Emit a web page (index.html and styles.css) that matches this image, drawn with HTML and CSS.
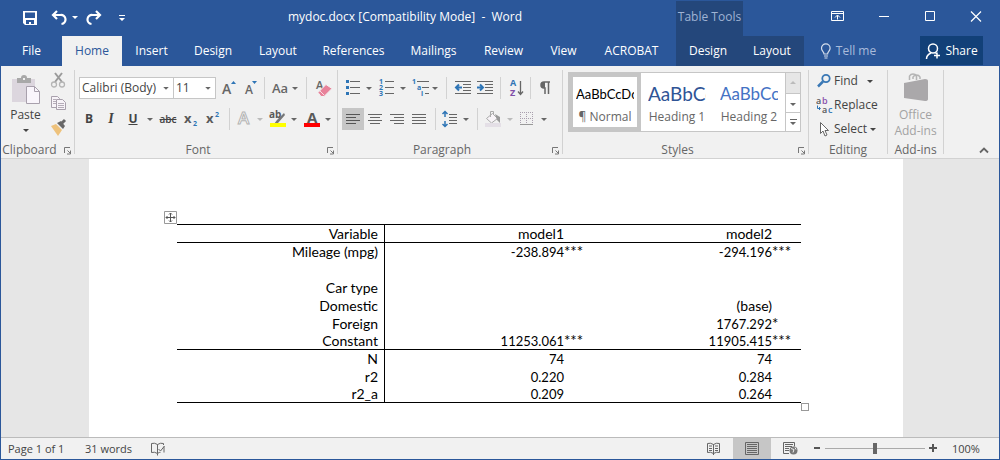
FILE: index.html
```html
<!DOCTYPE html>
<html lang="en">
<head>
<meta charset="utf-8">
<title>mydoc.docx - Word</title>
<link rel="stylesheet" href="styles.css">
</head>
<body>
<svg class="defs" aria-hidden="true">
  <symbol id="caret" viewBox="0 0 12 22"><path d="M3 10h6l-3 3z" fill="currentColor"/></symbol>
  <symbol id="launch" viewBox="0 0 16 16"><path d="M6.500 11V5.500H12M9.500 8.500l3 3M12.500 8.500v3.500H9" fill="none" stroke="#777"/></symbol>
</svg>
<div class="window">
  <header class="titlebar">
    <div class="quick">
      <button class="ib" aria-label="Save"><svg width="50" height="35"><path d="M22 10h14v14H24l-2-2z" fill="#fff"/><path d="M24 11.500h10v5.500H24zM25 19h8v4h-3v-2h-2v2h-3z" fill="#2b579a"/></svg></button>
      <button class="ib" aria-label="Undo"><svg width="18" height="35"><path d="M6 10l-4 4 4 4M2.500 14H9.500a4.500 4.500 0 0 1 1 9" fill="none" stroke="#fff" stroke-width="2.200"/></svg></button>
      <button class="ib caret" aria-label="Undo list"><svg width="12" height="35"><path d="M3 15h6l-3 3z" fill="#fff"/></svg></button>
      <button class="ib" aria-label="Redo"><svg width="24" height="35"><path d="M15 10l4 4-4 4M18.500 14H11.500a4.500 4.500 0 0 0-1 9" fill="none" stroke="#fff" stroke-width="2.200"/></svg></button>
      <button class="ib" aria-label="Customize toolbar"><svg width="29" height="35"><path d="M14 14h6v1h-6zM14 17h6l-3 3z" fill="#fff"/></svg></button>
    </div>
    <h1 class="title">mydoc.docx [Compatibility Mode]&nbsp; -&nbsp; Word</h1>
    <div class="context">Table Tools</div>
    <div class="controls">
      <button class="ib" aria-label="Ribbon display options"><svg width="46" height="30"><path d="M16.500 10.500h12v9h-12zM16.500 12.500h12M22.500 18.500v-4M20 16.500l2.500-2.500 2.500 2.500" fill="none" stroke="#fff"/></svg></button>
      <button class="ib" aria-label="Minimize"><svg width="46" height="30"><path d="M18 15.500h10" stroke="#fff"/></svg></button>
      <button class="ib" aria-label="Maximize"><svg width="46" height="30"><path d="M18.500 10.500h9v9h-9z" fill="none" stroke="#fff"/></svg></button>
      <button class="ib" aria-label="Close"><svg width="46" height="30"><path d="M18 10.500l10 10M28 10.500l-10 10" stroke="#fff" stroke-width="1.200"/></svg></button>
    </div>
  </header>
  <nav class="tabs">
    <button>File</button>
    <button class="active">Home</button>
    <button>Insert</button>
    <button>Design</button>
    <button>Layout</button>
    <button>References</button>
    <button>Mailings</button>
    <button>Review</button>
    <button>View</button>
    <button class="wide">ACROBAT</button>
    <button class="tool">Design</button>
    <button class="tool">Layout</button>
    <button class="tell"><svg width="12" height="16"><path d="M4 11c0-2.500-2.500-3-2.500-5.800a4.300 4.300 0 0 1 8.600 0C10.100 8 7.600 8.500 7.600 11zM4 13h4M4.500 15h3" fill="none" stroke="#d5deec" stroke-width="1.200"/></svg>Tell me</button>
    <button class="share"><svg width="16" height="18"><circle cx="8" cy="6.500" r="4.500" fill="none" stroke="#fff" stroke-width="1.500"/><path d="M1.500 17c0-3.500 2-5 4.500-6M10 10.500l1.500 1M12 10.500v6M9 13.500h6" fill="none" stroke="#fff" stroke-width="1.500"/></svg>Share</button>
  </nav>

  <div class="ribbon">
    <section class="group clipboard">
      <div class="body">
        <button class="ib paste"><svg width="30" height="31"><path d="M1 5h23v23H1z" fill="#dcd6de"/><path d="M6 4h4a3 3 0 0 1 6 0h4v5H6z" fill="#a8a8a8"/><path d="M12 4h2v2h-2z" fill="#f1f1f1"/><path d="M15.500 12.500h8l5 5v12h-13z" fill="#f9f5fb" stroke="#a8a0ac"/><path d="M23.500 12.500v5h5" fill="none" stroke="#a8a0ac"/></svg><span>Paste</span><svg class="drop" width="12" height="14" viewBox="0 4 12 14"><use href="#caret" width="12" height="22"/></svg></button>
        <div class="stack">
          <button class="ib" aria-label="Cut"><svg width="18" height="23"><path d="M5 4l7 9M12 4l-7 9" stroke="#9b9b9b" stroke-width="2"/><circle cx="4" cy="15.500" r="2.500" fill="none" stroke="#b5b5b5" stroke-width="1.300"/><circle cx="12" cy="15.500" r="2.500" fill="none" stroke="#b5b5b5" stroke-width="1.300"/></svg></button>
          <button class="ib" aria-label="Copy"><svg width="18" height="23"><g fill="#f7f3f8" stroke="#a8a0ac"><path d="M1.500 4.500h6l2 2v9h-8z"/><path d="M6.500 7.500h6l3 3v7h-9z"/></g><path d="M3 7.500h3M3 9.500h3M3 11.500h3M8 11.500h6M8 13.500h6M8 15.500h6" stroke="#b5adb8"/></svg></button>
          <button class="ib" aria-label="Format Painter"><svg width="18" height="23"><path d="M1 11l5-2 6 6-4 6z" fill="#eec27c"/><path d="M7 8l6 6 2-3-4-5z" fill="#686868"/><path d="M11 9l4-4" stroke="#686868" stroke-width="3"/></svg></button>
        </div>
      </div>
      <footer><span>Clipboard</span><button class="ib" aria-label="Clipboard settings"><svg width="16" height="16"><use href="#launch"/></svg></button></footer>
    </section>
    <i class="divider"></i>
    <section class="group font">
      <div class="body rows">
        <div class="row inset">
          <label class="combo name"><select aria-label="Font"><option>Calibri (Body)</option></select><svg width="12" height="20"><use href="#caret"/></svg></label>
          <label class="combo size"><select aria-label="Font size"><option>11</option></select><svg width="12" height="20"><use href="#caret"/></svg></label>
          <button class="ib" aria-label="Grow font"><svg width="24" height="22"><text x="6" y="17" font-size="14" class="medium">A</text><path d="M15 7l2.500-3L20 7z" fill="#2e75b6"/></svg></button>
          <button class="ib" aria-label="Shrink font"><svg width="24" height="22"><text x="5" y="17" font-size="12" class="medium">A</text><path d="M12 4h5l-2.500 3z" fill="#2e75b6"/></svg></button>
          <i class="sep tight"></i>
          <button class="ib" aria-label="Change case"><svg width="24" height="22"><text x="7" y="16" font-size="13" class="medium">Aa</text></svg></button>
          <button class="ib caret" aria-label="Case options"><svg width="12" height="22"><use href="#caret"/></svg></button>
          <i class="sep"></i>
          <button class="ib" aria-label="Clear formatting"><svg width="26" height="22"><text x="9" y="12" font-size="11" class="medium">A</text><path d="M11 15.500l8-8 6 4-8 8h-3z" fill="#e8829a" stroke="#f1f1f1"/><path d="M13 14l4 4" stroke="#fbdde3"/></svg></button>
        </div>
        <div class="row edge">
          <button class="ib letter b">B</button>
          <button class="ib letter i">I</button>
          <button class="ib letter u">U</button>
          <button class="ib caret" aria-label="Underline style"><svg width="12" height="22"><use href="#caret"/></svg></button>
          <button class="ib strike">abc</button>
          <button class="ib" aria-label="Subscript"><svg width="22" height="22"><text x="4" y="15" font-size="13" class="heavy">x</text><text x="13" y="18" font-size="7" class="blue">2</text></svg></button>
          <button class="ib" aria-label="Superscript"><svg width="22" height="22"><text x="4" y="15" font-size="13" class="heavy">x</text><text x="13" y="9" font-size="7" class="blue">2</text></svg></button>
          <i class="sep"></i>
          <button class="ib" aria-label="Text effects"><svg width="24" height="22"><text x="8" y="16" font-size="17" fill="#fff" stroke="#b3b3b3" font-weight="600">A</text></svg></button>
          <button class="ib caret faint" aria-label="Effects options"><svg width="12" height="22"><use href="#caret"/></svg></button>
          <button class="ib" aria-label="Highlight colour"><svg width="22" height="22"><text x="3" y="10" font-size="10" class="heavy">ab</text><path d="M18 5l-7 7-3 4 4-1 7-8z" fill="#777"/><path d="M4 15h16v4H4z" fill="#ff0"/></svg></button>
          <button class="ib caret" aria-label="Highlight options"><svg width="12" height="22"><use href="#caret"/></svg></button>
          <button class="ib" aria-label="Font colour"><svg width="22" height="22"><text x="7" y="15" font-size="15" class="heavy">A</text><path d="M4 15h16v4H4z" fill="red"/></svg></button>
          <button class="ib caret" aria-label="Colour options"><svg width="12" height="22"><use href="#caret"/></svg></button>
        </div>
      </div>
      <footer><span>Font</span><button class="ib" aria-label="Font settings"><svg width="16" height="16"><use href="#launch"/></svg></button></footer>
    </section>
    <i class="divider"></i>
    <section class="group para">
      <div class="body rows">
        <div class="row edge">
          <button class="ib" aria-label="Bullets"><svg width="22" height="22"><path d="M9 4.500h10M9 10.500h10M9 16.500h10" stroke="#666"/><path d="M5 3h3v3H5zM5 9h3v3H5zM5 15h3v3H5z" fill="#2e75b6"/></svg></button>
          <button class="ib caret" aria-label="Bullet options"><svg width="12" height="22"><use href="#caret"/></svg></button>
          <button class="ib" aria-label="Numbering"><svg width="22" height="22"><path d="M10 4.500h9M10 10.500h9M10 16.500h9" stroke="#666"/><g font-size="7" class="blue"><text x="4" y="7">1</text><text x="4" y="13">2</text><text x="4" y="19">3</text></g></svg></button>
          <button class="ib caret" aria-label="Numbering options"><svg width="12" height="22"><use href="#caret"/></svg></button>
          <button class="ib" aria-label="Multilevel list"><svg width="20" height="22"><path d="M8 4.500h12M13 10.500h7M16 16.500h4" stroke="#666"/><g font-size="7" class="blue"><text x="3" y="7">1</text><text x="8" y="13">a</text><text x="12" y="19">i</text></g></svg></button>
          <button class="ib caret" aria-label="Multilevel options"><svg width="12" height="22"><use href="#caret"/></svg></button>
          <i class="sep"></i>
          <button class="ib" aria-label="Decrease indent"><svg width="24" height="22"><path d="M8 4.500h16M16 7.500h8M16 10.500h8M16 13.500h8M8 16.500h16" stroke="#666"/><path d="M15 10.500H9M12 7.500l-3 3 3 3" fill="none" stroke="#2e75b6" stroke-width="2"/></svg></button>
          <button class="ib" aria-label="Increase indent"><svg width="24" height="22"><path d="M6 4.500h16M14 7.500h8M14 10.500h8M14 13.500h8M6 16.500h16" stroke="#666"/><path d="M6 10.500h6M9 7.500l3 3-3 3" fill="none" stroke="#2e75b6" stroke-width="2"/></svg></button>
          <i class="sep"></i>
          <button class="ib" aria-label="Sort"><svg width="24" height="22"><g font-size="9" font-weight="700"><text x="9" y="9" fill="#2e75b6">A</text><text x="9" y="19" fill="#7f4fa8">Z</text></g><path d="M19.500 4v13M17 14.500l2.500 3 2.500-3" fill="none" stroke="#666" stroke-width="1.300"/></svg></button>
          <i class="sep"></i>
          <button class="ib" aria-label="Show paragraph marks"><svg width="24" height="22"><path d="M19 5h-6a3 3 0 0 0 0 6h1v6M17.500 5v12" fill="none" stroke="#666" stroke-width="1.500"/><path d="M14 5h-1a3 3 0 0 0 0 6h1z" fill="#666"/></svg></button>
        </div>
        <div class="row inset">
          <button class="ib on" aria-label="Align left"><svg width="22" height="22"><path d="M4 6.500h14M4 9.500h10M4 12.500h14M4 15.500h10" stroke="#555"/></svg></button>
          <button class="ib" aria-label="Center"><svg width="22" height="22"><path d="M4 6.500h14M6 9.500h10M4 12.500h14M6 15.500h10" stroke="#666"/></svg></button>
          <button class="ib" aria-label="Align right"><svg width="22" height="22"><path d="M4 6.500h14M8 9.500h10M4 12.500h14M8 15.500h10" stroke="#666"/></svg></button>
          <button class="ib" aria-label="Justify"><svg width="22" height="22"><path d="M4 6.500h14M4 9.500h14M4 12.500h14M4 15.500h14" stroke="#666"/></svg></button>
          <i class="sep"></i>
          <button class="ib" aria-label="Line spacing"><svg width="24" height="22"><path d="M13 6.500h8M13 9.500h8M13 12.500h8M13 15.500h8" stroke="#666"/><path d="M9 4v5M9 13v5M6.500 6L9 3.500 11.500 6M6.500 16l2.500 2.500 2.500-2.500" fill="none" stroke="#2e75b6" stroke-width="1.500"/></svg></button>
          <button class="ib caret" aria-label="Spacing options"><svg width="12" height="22"><use href="#caret"/></svg></button>
          <i class="sep"></i>
          <button class="ib" aria-label="Shading"><svg width="26" height="22"><path d="M8.500 10.500l6-5 5 5-6 4.500z" fill="#f8f4f8" stroke="#aaa"/><path d="M12.500 9V3.500h3V7" fill="none" stroke="#aaa"/><path d="M17 6l5 3v6l-3-3z" fill="#999"/><path d="M7 15h16v4H7z" fill="#e4dfe6"/></svg></button>
          <button class="ib caret faint" aria-label="Shading options"><svg width="12" height="22"><use href="#caret"/></svg></button>
          <button class="ib" aria-label="Borders"><svg width="22" height="22"><path d="M4.500 4v12M10.500 4v12M16.500 4v12M4 4.500h13M4 10.500h13" stroke="#a99fae" stroke-dasharray="1 1"/><path d="M4 16.500h13" stroke="#999"/></svg></button>
          <button class="ib caret" aria-label="Border options"><svg width="12" height="22"><use href="#caret"/></svg></button>
        </div>
      </div>
      <footer><span>Paragraph</span><button class="ib" aria-label="Paragraph settings"><svg width="16" height="16"><use href="#launch"/></svg></button></footer>
    </section>
    <i class="divider"></i>
    <section class="group styles">
      <div class="body">
        <div class="gallery">
          <button class="style chosen"><span class="sample normal">AaBbCcDc</span><span>¶ Normal</span></button>
          <button class="style"><span class="sample h1">AaBbCc</span><span>Heading 1</span></button>
          <button class="style"><span class="sample h2">AaBbCc</span><span>Heading 2</span></button>
          <div class="scroll">
            <button class="ib off" aria-label="Scroll up"><svg width="14" height="20"><path d="M4 11h6l-3-3z" fill="#bbb"/></svg></button>
            <button class="ib" aria-label="Scroll down"><svg width="14" height="18"><path d="M4 9h6l-3 3z" fill="#666"/></svg></button>
            <button class="ib" aria-label="More styles"><svg width="14" height="18"><path d="M4 6h7v1H4zM4 9h6l-3 3z" fill="#666"/></svg></button>
          </div>
        </div>
      </div>
      <footer><span>Styles</span><button class="ib" aria-label="Styles settings"><svg width="16" height="16"><use href="#launch"/></svg></button></footer>
    </section>
    <i class="divider"></i>
    <section class="group editing">
      <div class="body commands">
        <button class="ib"><svg width="18" height="18"><circle cx="10" cy="6.500" r="3.700" fill="none" stroke="#3a78b5" stroke-width="1.800"/><path d="M7 9.500l-5 5" stroke="#3a78b5" stroke-width="2.500"/></svg><span>Find</span><svg class="far" width="12" height="22"><use href="#caret"/></svg></button>
        <button class="ib"><svg width="18" height="18"><g font-size="9" font-weight="600"><text x="0" y="8" fill="#555">a</text><text x="6" y="8" fill="#8a50ab">b</text><text x="6" y="17" fill="#555">a</text><text x="12" y="17" fill="#2e75b6">c</text></g><path d="M1.500 9.500v3H4M3 11l1.500 1.500L3 14" fill="none" stroke="#2e75b6"/></svg><span>Replace</span></button>
        <button class="ib"><svg width="18" height="18"><path d="M4.500 2.500v11l2.500-2.500 2 5 2-1-2-4.500h3.500z" fill="#fff" stroke="#666"/></svg><span>Select</span><svg width="12" height="22"><use href="#caret"/></svg></button>
      </div>
      <footer><span>Editing</span></footer>
    </section>
    <i class="divider"></i>
    <section class="group addins">
      <div class="body">
        <button class="ib office"><svg width="26" height="31"><path d="M1 11l21-4q3 0 3 2v18q0 2-3 2L1 26z" fill="#aaa8aa"/><path d="M6.500 8V4a4 4 0 0 1 7 0v4M10 7V5a4 4 0 0 1 7 0v2" fill="none" stroke="#b5b5b5" stroke-width="1.500"/></svg><span>Office<br>Add-ins</span></button>
      </div>
      <footer><span>Add-ins</span></footer>
    </section>
    <i class="divider"></i>
    <button class="ib collapse" aria-label="Collapse the ribbon"><svg width="30" height="16"><path d="M11 10.500l4-4 4 4" fill="none" stroke="#666" stroke-width="1.800"/></svg></button>
  </div>

  <main class="workspace">
    <article class="page">
      <div class="tablewrap">
        <svg class="move" width="13" height="13"><path d="M.5.500h12v12H.5z" fill="#fff" stroke="#999"/><path d="M6.500 2v9M2 6.500h9M5 3.500L6.500 2 8 3.500M5 9.500L6.500 11 8 9.500M3.500 5L2 6.500 3.500 8M9.500 5L11 6.500 9.500 8" fill="none" stroke="#555"/></svg>
        <table>
          <thead>
            <tr><th>Variable</th><th>model1<span class="stars"></span></th><th>model2<span class="stars"></span></th></tr>
          </thead>
          <tbody>
            <tr><th>Mileage (mpg)</th><td>-238.894<span class="stars">***</span></td><td>-294.196<span class="stars">***</span></td></tr>
            <tr><th>&nbsp;</th><td></td><td></td></tr>
            <tr><th>Car type</th><td></td><td></td></tr>
            <tr><th>Domestic</th><td></td><td class="base">(base)<span class="stars"></span></td></tr>
            <tr><th>Foreign</th><td></td><td>1767.292<span class="stars">*</span></td></tr>
            <tr><th>Constant</th><td>11253.061<span class="stars">***</span></td><td>11905.415<span class="stars">***</span></td></tr>
          </tbody>
          <tbody>
            <tr><th>N</th><td>74<span class="stars"></span></td><td>74<span class="stars"></span></td></tr>
            <tr><th>r2</th><td>0.220<span class="stars"></span></td><td>0.284<span class="stars"></span></td></tr>
            <tr><th>r2_a</th><td>0.209<span class="stars"></span></td><td>0.264<span class="stars"></span></td></tr>
          </tbody>
        </table>
        <i class="resize"></i>
      </div>
    </article>
  </main>

  <footer class="status">
    <span class="pages">Page 1 of 1</span>
    <span class="words">31 words</span>
    <button class="ib proof" aria-label="Proofing"><svg width="16" height="16"><path d="M7.500 3.500q-3-2-6-1v9q3-1 6 1v2M7.500 12.500q2-1.500 3-1.200M7.500 12V3.500q3-2 6-1V4M14 5.500v6M8.500 8l2 2 4-5" fill="none" stroke="#666"/></svg></button>
    <div class="views">
      <button class="ib" aria-label="Read mode"><svg width="38" height="21"><path d="M18.500 6.500q-3-2-6-1v9q3-1 6 1zM18.500 6.500q3-2 6-1v9q-3-1-6 1zM14 8h3M14 10.500h3M14 12.500h3M20 8h3M20 10.500h3M20 12.500h3M18.500 15v2" fill="none" stroke="#666"/></svg></button>
      <button class="ib on" aria-label="Print layout"><svg width="38" height="21"><path d="M12.500 4.500h13v12h-13zM14 6.500h10M14 8.500h10M14 10.500h10M14 12.500h10M14 14.500h10" fill="none" stroke="#666"/></svg></button>
      <button class="ib" aria-label="Web layout"><svg width="38" height="21"><path d="M18 15.500h-5.500v-11h11v4M14 6.500h8M14 8.500h7M14 10.500h4M14 12.500h4" fill="none" stroke="#666"/><circle cx="22.500" cy="12.500" r="4" fill="#777"/><path d="M20 10.500l3 1-1 3M24 9.500l1 2" fill="none" stroke="#f1f1f1"/></svg></button>
    </div>
    <button class="ib" aria-label="Zoom out"><svg width="16" height="21"><path d="M5 10h6" stroke="#555" stroke-width="2"/></svg></button>
    <input class="zoom" type="range" aria-label="Zoom" min="0" max="100" value="50">
    <button class="ib" aria-label="Zoom in"><svg width="16" height="21"><path d="M4 10h8M8 6v8" stroke="#555" stroke-width="2"/></svg></button>
    <span class="percent">100%</span>
  </footer>
</div>
</body>
</html>
```
FILE: styles.css
```css
* { box-sizing: border-box; }
body { margin: 0; font: 12px/16px "Open Sans", "Noto Sans", sans-serif; color: #444; }
button, select, input { font: inherit; color: inherit; margin: 0; }
svg { display: block; flex: none; }
.defs { position: absolute; width: 0; height: 0; }
.window { min-height: 100vh; display: flex; flex-direction: column; border: 1px solid #2b579a; background: #f1f1f1; }
.ib { flex: none; display: flex; align-items: center; padding: 0; border: 0; background: none; }
.on { background: #c6c6c6; }

.titlebar { display: flex; height: 35px; background: #2b579a; color: #fff; }
.quick { display: flex; flex: none; width: 133px; }
.title { flex: none; width: 542px; margin: 0; font-size: 12px; font-weight: 400; line-height: 32px; text-align: center; }
.context { flex: none; width: 67px; background: #24477b; color: #9fb3d4; line-height: 32px; text-align: center; }
.controls { display: flex; margin-left: auto; align-items: flex-start; }

.tabs { display: grid; grid-template-columns: 61px 60px 59px 64px 66px 85px 75px 65px 55px 85px 64px 64px 84px 1fr; height: 30px; background: #2b579a; color: #fff; }
.tabs button { display: flex; align-items: center; justify-content: center; padding: 0; border: 0; background: none; }
.tabs .active { background: #f1f1f1; color: #2b579a; }
.tabs .wide { padding-right: 4px; }
.tabs .tool { background: #24477b; }
.tabs .tell { gap: 4px; padding-left: 4px; color: #a9bbda; }
.tabs .share { gap: 4px; justify-self: end; width: 63px; margin: 0 16px 1px 0; background: #124078; }

.ribbon { display: flex; border-bottom: 1px solid #d2d2d2; background: #f1f1f1; }
.group { flex: none; display: flex; flex-direction: column; }
.group .body { display: flex; flex: 1; min-height: 76px; }
.group footer { display: flex; height: 16px; color: #666; text-align: center; }
.group footer span { flex: 1; }
.divider { flex: none; width: 1px; margin: 4px 0; background: #d2d2d2; }
.clipboard { width: 73px; }
.font { width: 262px; }
.para { width: 224px; }
.styles { width: 245px; }
.editing { width: 78px; }
.addins { width: 55px; }

.paste { flex-direction: column; width: 49px; padding-top: 8px; }
.paste span { margin-top: 2px; }
.stack { padding-top: 3px; }
.rows { flex-direction: column; gap: 9px; padding-top: 11px; }
.row { display: flex; align-items: center; height: 22px; }
.row.inset { padding-left: 4px; }
.row.edge { padding-left: 3px; }
.sep { flex: none; width: 1px; height: 22px; margin-left: 5px; background: #d2d2d2; }
.sep.tight { margin-left: 0; }
.caret { color: #666; }
.faint { color: #bbb; }
.combo { position: relative; height: 22px; }
.combo select { width: 100%; height: 22px; padding: 0 2px; border: 1px solid #c6c6c6; border-radius: 0; background: #fff; appearance: none; }
.combo svg { position: absolute; right: 2px; top: 1px; color: #666; pointer-events: none; }
.combo.name { width: 95px; }
.combo.size { width: 42px; }
.combo.size select { border-left: 0; }
.heavy { font-weight: 700; fill: #5a5a5a; }
.medium { font-weight: 600; fill: #666; }
.blue { font-weight: 700; fill: #2e75b6; }
.letter { justify-content: center; width: 22px; font-weight: 700; }
.i { font-family: "Liberation Serif", serif; font-size: 14px; font-style: italic; }
.u { text-decoration: underline; }
.strike { justify-content: center; width: 24px; font-size: 10px; font-weight: 600; text-decoration: line-through; }

.styles .body { align-items: flex-start; padding: 6px 7px 0 5px; }
.gallery { display: flex; flex: 1; min-width: 0; height: 60px; border: 1px solid #c6c6c6; background: #fff; }
.style { display: flex; flex: 1; flex-direction: column; align-items: center; min-width: 0; padding: 7px 3px 0; border: 4px solid #fff; background: #fff; color: #666; }
.style > span { white-space: nowrap; }
.style.chosen { border-color: #c6c6c6; }
.sample { align-self: stretch; overflow: hidden; height: 20px; margin-bottom: 5px; font-family: Lato, sans-serif; line-height: 20px; text-align: left; }
.normal { color: #000; font-size: 13px; }
.h1 { color: #2f5496; font-size: 19px; }
.h2 { color: #4472c4; font-size: 17px; }
.scroll { flex: none; width: 15px; border-left: 1px solid #c6c6c6; }
.scroll .ib + .ib { border-top: 1px solid #c6c6c6; }
.scroll .off { background: #e6e6e6; }

.commands { flex-direction: column; gap: 5px; padding: 5px 6px 0 7px; }
.commands .ib { width: 100%; height: 19px; }
.commands .far { margin-left: 6px; }
.office { flex-direction: column; width: 100%; padding-top: 6px; color: #a3a3a3; }
.office span { margin-top: 4px; }
.collapse { align-self: flex-end; margin-left: auto; }

.workspace { display: flex; flex: 1; padding: 0 96px 0 88px; background: #e6e6e6; }
.page { flex: 1; padding: 65px 102px 32px 88px; background: #fff; }
.tablewrap { position: relative; }
.move { position: absolute; left: -13px; top: -13px; }
.resize { position: absolute; right: -8px; bottom: -8px; width: 8px; height: 8px; border: 1px solid #999; background: #fff; }
table { width: 100%; table-layout: fixed; border-spacing: 0; border-top: 1px solid #000; color: #000; font: 14px/16px Lato, sans-serif; }
th, td { height: 18px; padding: 0 8px 0 0; font-weight: 400; text-align: right; }
td { font-size: 13px; }
.base { font-size: 14px; }
th:first-child { padding-right: 6px; border-right: 1px solid #000; }
tbody tr:last-child > * { height: 17px; }
thead th, tbody tr:last-child > * { border-bottom: 1px solid #000; }
.stars { display: inline-block; width: 21px; font-size: 15px; line-height: 14px; text-align: left; vertical-align: top; }

.status { display: flex; align-items: center; height: 22px; border-top: 1px solid #bbb; font-size: 11px; }
.pages { margin-left: 7px; width: 77px; }
.words { width: 65px; }
.views { display: flex; margin-left: auto; }
.zoom { width: 100px; height: 12px; appearance: none; background: linear-gradient(#aaa, #aaa) center / 100% 1px no-repeat; }
.zoom::-webkit-slider-thumb { appearance: none; width: 4px; height: 11px; background: #666; }
.percent { width: 58px; padding-left: 11px; }
```
